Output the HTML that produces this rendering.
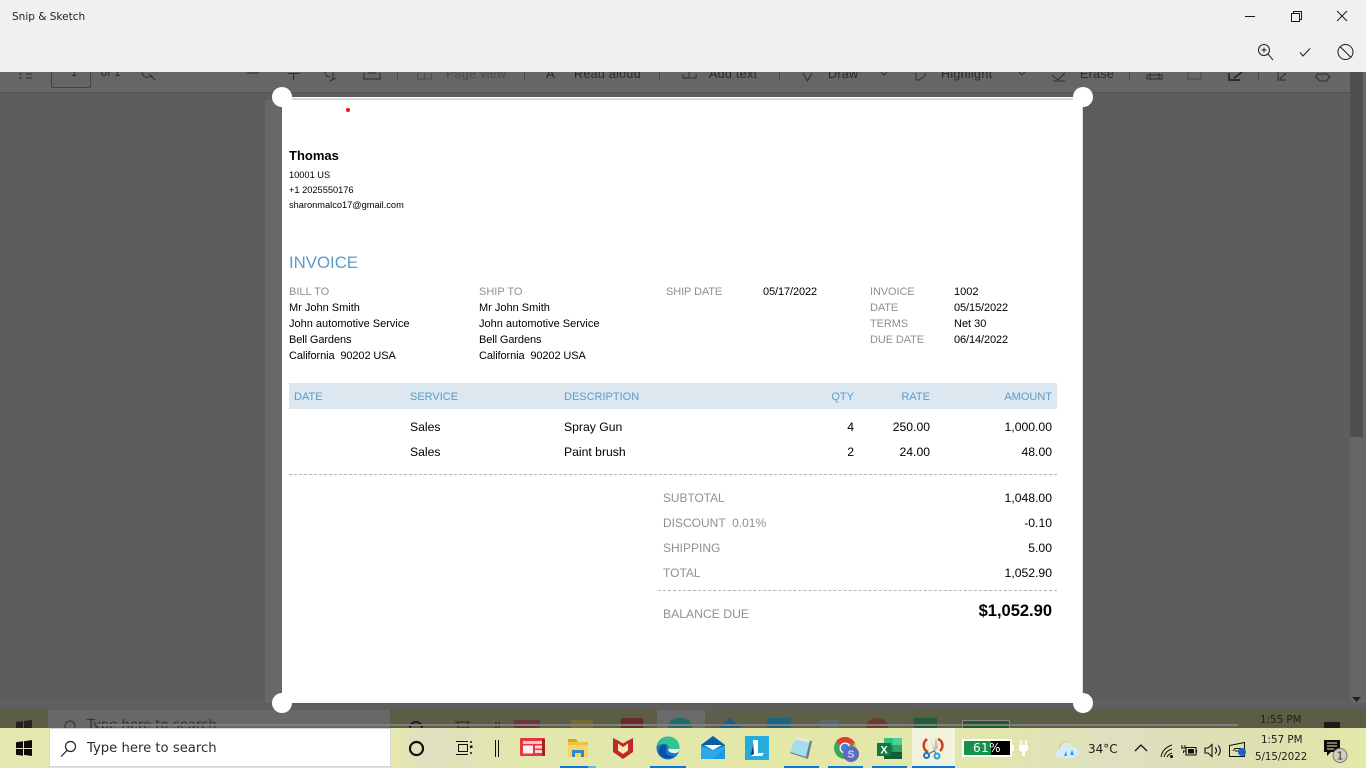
<!DOCTYPE html>
<html><head><meta charset="utf-8"><style>
html,body{margin:0;padding:0;width:1366px;height:768px;overflow:hidden;background:#5d5d5d;font-family:"Liberation Sans",sans-serif}
.t{position:absolute;white-space:pre;line-height:16px;height:16px}
.g{color:#8f8f96}.k{color:#000}.b{color:#5a9cc9}
.r{text-align:right}
.s{font-size:11px}.m{font-size:12.2px}.x{font-size:9.25px}
.n{letter-spacing:-.1px}
svg{position:absolute;overflow:visible}
.box{position:absolute}
.tb{font-size:12.5px;letter-spacing:.3px;top:66px;line-height:16px;position:absolute;white-space:pre;font-family:"Liberation Sans",sans-serif;color:#2a2a2a}
</style></head><body>
<!-- dim background -->
<div class="box" style="left:0;top:72px;width:1366px;height:21px;background:#666"></div>
<div class="box" style="left:0;top:92px;width:1350px;height:1px;background:#535353"></div>
<div class="box" style="left:1350px;top:72px;width:16px;height:636px;background:#666"></div>
<div class="box" style="left:1350px;top:72px;width:13px;height:365px;background:#4f4f4f"></div>
<svg style="left:1352px;top:697px" width="10" height="6"><path d="M0 0H9L4.500 5z" fill="#222"/></svg>
<div class="box" style="left:0;top:702px;width:1350px;height:1px;background:#666"></div>
<div class="box" style="left:265px;top:100px;width:17px;height:608px;background:#686868"></div>
<!-- toolbar remnants -->
<div class="box" style="left:51px;top:72px;width:38px;height:15px;border:1px solid #444;border-top:0;border-radius:0 0 2px 2px"></div>
<div class="tb" style="left:71px;font-size:11px;top:65px">1</div>
<div class="tb" style="left:101px;font-size:11px;top:65px">of 1</div>
<svg style="left:15px;top:72px" width="300" height="14" fill="none" stroke="#2e2e2e"><path d="M4 2H7M11 2H17M4 6H7M11 6H17"/><path d="M127 0a5.500 5.500 0 0 0 10 3M134 2L140 8"/></svg>
<svg style="left:240px;top:70px" width="150" height="18" fill="none" stroke="#2e2e2e"><path d="M7 3H19M53.500 3V10M48 3.500H60"/><path d="M85 2C85 5 87 7 90 7M93 2V9L90 11L96 8M124 3V9H140V3M128 3H136"/></svg>
<div class="box" style="left:397px;top:72px;width:1px;height:7px;background:#4a4a4a"></div>
<svg style="left:415px;top:70px" width="20" height="18" fill="none" stroke="#4a4a4a"><path d="M2.500 3V9H16.500V3M9.500 3V9"/></svg>
<div class="tb" style="left:446px;color:#4c4c4c">Page view</div>
<div class="box" style="left:524px;top:72px;width:1px;height:8px;background:#4a4a4a"></div>
<div class="tb" style="left:546px;font-size:13px">A</div>
<div class="tb" style="left:574px">Read aloud</div>
<div class="box" style="left:659px;top:72px;width:1px;height:8px;background:#4a4a4a"></div>
<svg style="left:683px;top:70px" width="16" height="10" fill="none" stroke="#2e2e2e"><path d="M0 4V8H13V4M6 2V7"/></svg>
<div class="tb" style="left:709px">Add text</div>
<div class="box" style="left:779px;top:72px;width:1px;height:8px;background:#4a4a4a"></div>
<svg style="left:802px;top:70px" width="14" height="12" fill="none" stroke="#2e2e2e"><path d="M1 3L5.500 11L10 3"/></svg>
<div class="tb" style="left:828px">Draw</div>
<svg style="left:880px;top:72px" width="8" height="4" fill="none" stroke="#333"><path d="M1 0L4 3L7 0"/></svg>
<svg style="left:915px;top:70px" width="14" height="12" fill="none" stroke="#2e2e2e"><path d="M1 3V10H4L10 6V3"/></svg>
<div class="tb" style="left:941px">Highlight</div>
<svg style="left:1018px;top:72px" width="8" height="4" fill="none" stroke="#333"><path d="M1 0L4 3L7 0"/></svg>
<svg style="left:1050px;top:70px" width="18" height="12" fill="none" stroke="#2e2e2e"><path d="M2 5L8 10L15 3M3 11H15"/></svg>
<div class="tb" style="left:1080px">Erase</div>
<div class="box" style="left:1129px;top:72px;width:1px;height:8px;background:#4a4a4a"></div>
<svg style="left:1145px;top:70px" width="200" height="12" fill="none" stroke="#2e2e2e"><path d="M2 5H17V9H2zM5 3V9H14V3"/><path d="M43 2V9H56V2" stroke="#4a4a4a"/><path d="M84 3V10H95M89 8L97 2" stroke-width="2"/><path d="M133 2V10H141M135 9L141 3"/><path d="M172 4H182L185 7L181 11H175L171 7z"/></svg>
<div class="box" style="left:1258px;top:72px;width:1px;height:8px;background:#4a4a4a"></div>

<!-- title bar -->
<div class="box" style="left:0;top:0;width:1366px;height:72px;background:#f1f0f0"></div>
<div class="t" style="left:12px;top:9px;color:#222;font-family:'DejaVu Sans';font-size:10.5px">Snip &amp; Sketch</div>
<svg style="left:1240px;top:5px" width="126" height="60" fill="none" stroke="#1a1a1a" stroke-width="1">
<path d="M5 11.500H15"/>
<path d="M51.500 8.500H59.500V16.500H51.500zM53.500 8V6.500H61.500V14.500H60"/>
<path d="M97 6L107 16M107 6L97 16"/>
<circle cx="24" cy="45" r="5.500"/><path d="M28 49L33 55M21.500 45H26.500M24 42.500V47.500"/>
<path d="M60 47.500L63 51L70 43.500"/>
<circle cx="105.500" cy="47" r="7.500"/><path d="M100 41.500L111 52.500"/>
</svg>

<!-- paper -->
<div class="box" style="left:282px;top:97px;width:800px;height:606px;background:#fff"></div>
<div class="box" style="left:282px;top:97px;width:800px;height:3px;background:#d9d9d9"></div>
<div class="box" style="left:282px;top:97px;width:800px;height:1px;background:#fff"></div>
<div class="box" style="left:1082px;top:100px;width:1px;height:603px;background:#ddd"></div>
<div class="box" style="left:346px;top:108px;width:4px;height:4px;border-radius:50%;background:#f01020"></div>

<div class="t k" style="left:289px;top:148px;font-size:13px;font-weight:bold">Thomas</div>
<div class="t k x" style="left:289px;top:167px">10001 US</div>
<div class="t k x" style="left:289px;top:182px">+1 2025550176</div>
<div class="t k x" style="left:289px;top:197px">sharonmalco17@gmail.com</div>
<div class="t b" style="left:289px;top:254px;font-size:16.800px;line-height:17px;height:17px">INVOICE</div>

<div class="t g s" style="left:289px;top:284px">BILL TO</div>
<div class="t k s" style="left:289px;top:300px">Mr John Smith</div>
<div class="t k s" style="left:289px;top:316px">John automotive Service</div>
<div class="t k s n" style="left:289px;top:332px">Bell Gardens</div>
<div class="t k s n" style="left:289px;top:348px">California  90202 USA</div>
<div class="t g s" style="left:479px;top:284px">SHIP TO</div>
<div class="t k s" style="left:479px;top:300px">Mr John Smith</div>
<div class="t k s" style="left:479px;top:316px">John automotive Service</div>
<div class="t k s n" style="left:479px;top:332px">Bell Gardens</div>
<div class="t k s n" style="left:479px;top:348px">California  90202 USA</div>
<div class="t g s n" style="left:666px;top:284px">SHIP DATE</div>
<div class="t k s n" style="left:763px;top:284px">05/17/2022</div>
<div class="t g s n" style="left:870px;top:284px">INVOICE</div>
<div class="t k s" style="left:954px;top:284px">1002</div>
<div class="t g s n" style="left:870px;top:300px">DATE</div>
<div class="t k s n" style="left:954px;top:300px">05/15/2022</div>
<div class="t g s n" style="left:870px;top:316px">TERMS</div>
<div class="t k s" style="left:954px;top:316px">Net 30</div>
<div class="t g s n" style="left:870px;top:332px">DUE DATE</div>
<div class="t k s n" style="left:954px;top:332px">06/14/2022</div>

<div class="box" style="left:289px;top:383px;width:768px;height:26px;background:#dce7f0"></div>
<div class="t b s" style="left:294px;top:389px">DATE</div>
<div class="t b s" style="left:410px;top:389px">SERVICE</div>
<div class="t b s" style="left:564px;top:389px">DESCRIPTION</div>
<div class="t b s r" style="left:800px;width:54px;top:389px">QTY</div>
<div class="t b s r" style="left:870px;width:60px;top:389px">RATE</div>
<div class="t b s r" style="left:952px;width:100px;top:389px">AMOUNT</div>

<div class="t k m" style="left:410px;top:419px">Sales</div>
<div class="t k m" style="left:564px;top:419px">Spray Gun</div>
<div class="t k m r" style="left:800px;width:54px;top:419px">4</div>
<div class="t k m r" style="left:870px;width:60px;top:419px">250.00</div>
<div class="t k m r" style="left:952px;width:100px;top:419px">1,000.00</div>
<div class="t k m" style="left:410px;top:444px">Sales</div>
<div class="t k m" style="left:564px;top:444px">Paint brush</div>
<div class="t k m r" style="left:800px;width:54px;top:444px">2</div>
<div class="t k m r" style="left:870px;width:60px;top:444px">24.00</div>
<div class="t k m r" style="left:952px;width:100px;top:444px">48.00</div>
<div class="box" style="left:289px;top:474px;width:768px;border-top:1px dashed #b5b5b5"></div>

<div class="t g" style="left:663px;top:490px;font-size:11.900px">SUBTOTAL</div>
<div class="t k m r" style="left:952px;width:100px;top:490px">1,048.00</div>
<div class="t g" style="left:663px;top:515px;font-size:12px">DISCOUNT  0.01%</div>
<div class="t k m r" style="left:952px;width:100px;top:515px">-0.10</div>
<div class="t g" style="left:663px;top:540px;font-size:12px">SHIPPING</div>
<div class="t k m r" style="left:952px;width:100px;top:540px">5.00</div>
<div class="t g" style="left:663px;top:565px;font-size:12px">TOTAL</div>
<div class="t k m r" style="left:952px;width:100px;top:565px">1,052.90</div>
<div class="box" style="left:658px;top:590px;width:399px;border-top:1px dashed #b5b5b5"></div>
<div class="t g" style="left:663px;top:606px;font-size:12.200px">BALANCE DUE</div>
<div class="t k r" style="left:902px;width:150px;top:603px;font-size:16.500px;font-weight:bold">$1,052.90</div>

<!-- top handles -->
<div class="box" style="left:272px;top:87px;width:20px;height:20px;border-radius:50%;background:#fff"></div>
<div class="box" style="left:1072.500px;top:87px;width:20px;height:20px;border-radius:50%;background:#fff"></div>

<!-- dimmed taskbar -->
<div class="box" style="left:0;top:703px;width:1366px;height:7px;background:#5e5e5e"></div>
<div class="box" style="left:0;top:710px;width:1366px;height:18px;background:#5c5d45"></div>
<div class="box" style="left:48px;top:710px;width:342px;height:18px;background:#686868"></div>
<div class="box" style="left:657px;top:710px;width:48px;height:18px;background:#6a6a6a"></div>
<div class="box" style="left:705px;top:710px;width:205px;height:18px;background:#5e5f4b"></div>
<div class="t" style="left:87px;top:718px;font-family:'DejaVu Sans';font-size:13.200px;color:#333">Type here to search</div>
<svg style="left:16px;top:720px" width="16" height="8"><path d="M0 2L7 1V8H0zM8 1L16 0V8H8z" fill="#222"/></svg>
<svg style="left:62px;top:720px" width="16" height="8" fill="none" stroke="#333"><circle cx="8" cy="6" r="5"/></svg>
<svg style="left:408px;top:721px" width="100" height="7" fill="none" stroke="#222"><circle cx="8" cy="7" r="6" stroke-width="2"/><path d="M47 1H62M50 1V7H60V1M88 1V7M91 1V7"/></svg>
<div class="box" style="left:514px;top:720px;width:26px;height:8px;background:#6b3638"></div>
<div class="box" style="left:571px;top:720px;width:22px;height:8px;background:#7a6a30"></div>
<div class="box" style="left:621px;top:718px;width:22px;height:10px;background:#6b2a28"></div>
<div class="box" style="left:668px;top:718px;width:24px;height:10px;border-radius:12px 12px 0 0;background:#1c6a6e"></div>
<svg style="left:718px;top:718px" width="24" height="10"><path d="M0 10L12 0L24 10z" fill="#1d5b8a"/></svg>
<div class="box" style="left:767px;top:718px;width:24px;height:10px;background:#1a6580"></div>
<div class="box" style="left:820px;top:720px;width:18px;height:8px;background:#5a6a6a"></div>
<div class="box" style="left:866px;top:718px;width:22px;height:10px;border-radius:11px 11px 0 0;background:#6d3a2c"></div>
<div class="box" style="left:914px;top:718px;width:23px;height:10px;background:#1f5d3a"></div>
<div class="box" style="left:962px;top:720px;width:48px;height:8px;background:#1e5a30;border:1px solid #888;border-bottom:0;box-sizing:border-box"></div>
<div class="t" style="left:1260px;top:712px;color:#1f1f1f;font-family:'DejaVu Sans';font-size:10.300px">1:55 PM</div>
<div class="box" style="left:1324px;top:722px;width:16px;height:6px;background:#1c1c1c"></div>
<div class="box" style="left:98px;top:724px;width:1140px;height:2px;background:#7f7f7f"></div>

<!-- bottom handles -->
<div class="box" style="left:272px;top:693px;width:20px;height:20px;border-radius:50%;background:#fff"></div>
<div class="box" style="left:1072.500px;top:693px;width:20px;height:20px;border-radius:50%;background:#fff"></div>

<!-- taskbar -->
<div class="box" style="left:0;top:728px;width:1366px;height:40px;background:linear-gradient(90deg,#e4e8ae 0,#e4e8ae 29%,#dfe0c0 31%,#e2e7ac 38%,#e3e8a8 60%,#e2e6ad 73%,#dee0c0 82%,#dde0b0 92%,#e4e8a8 100%)"></div>
<div class="box" style="left:912px;top:728px;width:43px;height:40px;background:#f1f3dc"></div>
<svg style="left:16px;top:740px" width="17" height="17"><path d="M0 2.300L7 1.300V8H0zM8 1.200L16 0V8H8zM0 9H7V15.700L0 14.700zM8 9H16V16L8 14.900z" fill="#0b0b0b"/></svg>
<div class="box" style="left:49px;top:728px;width:342px;height:39px;background:#fff;border:1px solid #d5d5d5;box-sizing:border-box"></div>
<svg style="left:60px;top:740px" width="18" height="18" fill="none" stroke="#222" stroke-width="1.200"><circle cx="10.500" cy="6.500" r="5"/><path d="M7 10.500L1 16.500"/></svg>
<div class="t" style="left:87px;top:741px;font-family:'DejaVu Sans';font-size:13.200px;color:#2b2b2b">Type here to search</div>
<svg style="left:408px;top:740px" width="100" height="18" fill="none" stroke="#111"><circle cx="8.500" cy="8.500" r="6.500" stroke-width="2.200"/><path d="M48 1.500H60M48 14.500H60M50.500 4.500H59.500V11.500H50.500z"/><path d="M63 1V3M63 12V14" stroke-width="1.500"/><rect x="62" y="5.500" width="2.500" height="2.500" fill="#111" stroke="none"/><path d="M87.500 0V17M90.500 0V17"/></svg>
<!-- news -->
<svg style="left:520px;top:737px" width="26" height="22"><rect x="0" y="1" width="25" height="18" rx="1" fill="#e63740"/><rect x="22" y="2" width="3" height="17" fill="#a32025"/><rect x="3" y="4" width="19" height="3" fill="#ffc5c5"/><rect x="3" y="8.500" width="10" height="8" fill="#fff0f0"/><rect x="15" y="8.500" width="7" height="3" fill="#ffd5d5"/><rect x="15" y="13" width="7" height="3" fill="#ffd5d5"/></svg>
<!-- folder -->
<svg style="left:566px;top:738px" width="24" height="20"><path d="M2 1H10L12 4H2z" fill="#d9a520"/><rect x="2" y="4" width="20" height="15" fill="#f7d560"/><rect x="2" y="4" width="20" height="3" fill="#eec04a"/><path d="M6 19V12H18V19H15V15H9V19z" fill="#2b88d8"/></svg>
<!-- mcafee -->
<svg style="left:612px;top:736px" width="22" height="24"><path d="M1 2L6 4.500L11 7.500L16 4.500L21 2V16L11 23L1 16z" fill="#c1272d"/><path d="M6 7.500L11 11L16 7.500V14.500L11 18L6 14.500z" fill="#f6e9b2"/></svg>
<!-- edge -->
<svg style="left:656px;top:736px" width="24" height="24"><circle cx="12" cy="12" r="11.500" fill="#1578c9"/><path d="M1 10C3 2 11 0 15 1C21 2 24 8 23.500 13L12 13C14 8 8 6 1 10z" fill="#31c48d"/><path d="M10 13C8 17 12 21 18 20C15 23 8 24 4 19C2 16 3 11 6 9C8 8 11 9 10 13z" fill="#0c4f9e"/><path d="M12 13L23.500 13C23 16 21 18 17 17C14 17 12 15 12 13z" fill="#e8f4ef"/></svg>
<!-- mail -->
<svg style="left:701px;top:736px" width="24" height="24"><path d="M0 9L12 0L24 9V23H0z" fill="#1e9be0"/><path d="M0 9L12 0L24 9L12 14z" fill="#0a5ea8"/><path d="M3 9H21L12 14z" fill="#fff"/><path d="M0 10L12 15L24 10V12L12 23H0z" fill="#36b0ee" opacity=".6"/></svg>
<!-- L -->
<svg style="left:745px;top:736px" width="24" height="24"><rect width="24" height="24" fill="#25acd8"/><path d="M8 4H13V17H19L17 20H5C7 15 8 9 8 4z" fill="#fff"/><path d="M8 5L9 18L5 20C7 15 8 9 8 5z" fill="#123d78"/></svg>
<!-- notepad -->
<svg style="left:789px;top:736px" width="24" height="24"><path d="M7 2L23 5L19 23L1 17z" fill="#6a7e7a"/><path d="M7 1L21 4L17 21L1 16z" fill="#a9dceb"/><path d="M7 1L21 4L20.300 6.500L6 3.500z" fill="#e8e8e0"/></svg>
<!-- chrome -->
<svg style="left:834px;top:737px" width="24" height="24"><circle cx="11" cy="11" r="11" fill="#3aa757"/><path d="M11 0A11 11 0 0 1 21 6H11A5 5 0 0 0 6.500 8.500L2.500 4A11 11 0 0 1 11 0z" fill="#e33b2e"/><path d="M21 6A11 11 0 0 1 12 22L16 13z" fill="#f9c922"/><circle cx="11" cy="11" r="5.500" fill="#fff"/><circle cx="11" cy="11" r="4.200" fill="#3f7fe6"/><circle cx="17" cy="17" r="8" fill="#5c6bc0"/><text x="17" y="20.500" font-size="10" text-anchor="middle" fill="#fff" font-family="Liberation Sans">S</text></svg>
<!-- excel -->
<svg style="left:877px;top:737px" width="26" height="24"><rect x="7" y="1" width="18" height="21" fill="#1f8a55"/><rect x="7" y="1" width="18" height="7" fill="#34c07d"/><rect x="16" y="1" width="9" height="7" fill="#4cd097"/><rect x="7" y="15" width="18" height="7" fill="#11603b"/><rect x="16" y="8" width="9" height="7" fill="#2ca66b"/><rect x="0" y="6" width="14" height="13" fill="#0f7a3f"/><text x="7" y="16.500" font-size="11" font-weight="bold" text-anchor="middle" fill="#fff" font-family="Liberation Sans">X</text></svg>
<!-- snip -->
<svg style="left:922px;top:736px" width="24" height="24" fill="none"><path d="M5 3C0 7 1 14 6 16M18 15C22 11 21 5 16 3" stroke="#d43c1e" stroke-width="2.500"/><path d="M8 2L12 13L14 1L16 12L12 16z" fill="#bcbcbc"/><path d="M12 15L6 18M12 15L15 18" stroke="#666"/><circle cx="4.500" cy="19.500" r="2.500" stroke="#1c72c8" stroke-width="2"/><circle cx="15" cy="20" r="2.500" stroke="#2aa0e0" stroke-width="2"/></svg>
<!-- indicators -->
<div class="box" style="left:560px;top:766px;width:28px;height:2px;background:#0a78d4"></div>
<div class="box" style="left:588px;top:766px;width:8px;height:2px;background:#6ab4e8"></div>
<div class="box" style="left:650px;top:766px;width:36px;height:2px;background:#0a78d4"></div>
<div class="box" style="left:784px;top:766px;width:35px;height:2px;background:#0a78d4"></div>
<div class="box" style="left:828px;top:766px;width:35px;height:2px;background:#0a78d4"></div>
<div class="box" style="left:872px;top:766px;width:35px;height:2px;background:#0a78d4"></div>
<div class="box" style="left:912px;top:766px;width:43px;height:2px;background:#0a78d4"></div>
<!-- battery meter -->
<div class="box" style="left:962px;top:739px;width:50px;height:18px;background:#000;border:2px solid #fff;box-sizing:border-box"></div>
<div class="box" style="left:964px;top:741px;width:27px;height:14px;background:#13924a"></div>
<div class="box" style="left:1012px;top:745px;width:2px;height:6px;background:#fff"></div>
<div class="t" style="left:973px;top:740px;font-family:'DejaVu Sans';font-size:12px;color:#fff;letter-spacing:.4px">61%</div>
<svg style="left:1018px;top:740px" width="12" height="17"><path d="M3 0V5M8 0V5" stroke="#fff" stroke-width="1.500"/><path d="M1 5H10V10L7 12V16H4V12L1 10z" fill="#fff"/></svg>
<!-- weather -->
<svg style="left:1057px;top:740px" width="22" height="19"><path d="M2 8A6 6 0 0 1 12 3L6 11z" fill="#f3c64e"/><path d="M3 18A4 4 0 0 1 3 10A6 6 0 0 1 15 7A5.500 5.500 0 0 1 17 18z" fill="#d6ebfa"/><path d="M9 11L7 16H10zM15 10L13 15H17z" fill="#3a95dc"/></svg>
<div class="t" style="left:1088px;top:741px;font-family:'DejaVu Sans';font-size:12px;color:#1c1c1c">34°C</div>
<svg style="left:1134px;top:742px" width="120" height="18" fill="none" stroke="#111" stroke-width="1.100">
<path d="M1 9L7 3L13 9" stroke-width="1.300"/>
<path d="M27 15C28 9 32 5 38 3M30 15C31 11 34 8 38 7M33 15C34 13 35 12 38 11" stroke-width="1"/><circle cx="37.500" cy="14.500" r="1.500" fill="#111" stroke="none"/>
<path d="M52 5.500H62V13H52zM62.500 8V10.500" stroke-width="1.100"/><rect x="54" y="7" width="6" height="4.500" fill="#111" stroke="none"/><path d="M48 3V6M51 3V6M47 6H52V9H49.500V11" stroke-width="1"/>
<path d="M71 6H74L78 2.500V14.500L74 11H71zM81 5.500C83 7 83 10 81 11.500M84 3.500C87 6 87 11 84 13.500"/>
<path d="M95.500 3.500L110.500 0.500V14.500H95.500zM99 9L101 6.500H106M107 6L105 9H101" stroke-width="1"/></svg>
<div class="box" style="left:1238px;top:748px;width:8px;height:8px;border-radius:50%;background:#1c64c4"></div>
<div class="t" style="left:1261px;top:732px;font-family:'DejaVu Sans';font-size:10.300px;color:#1c1c1c">1:57 PM</div>
<div class="t" style="left:1255px;top:750px;font-family:'DejaVu Sans';font-size:10.200px;color:#1c1c1c">5/15/2022</div>
<svg style="left:1324px;top:740px" width="26" height="24"><path d="M0 0H16V12H7L3 16V12H0z" fill="#0b0b0b"/><path d="M3 3H13M3 6H13M3 9H10" stroke="#e4e8ae"/><circle cx="16" cy="15.500" r="7" fill="#cfcfbd" stroke="#777"/><text x="16" y="19.500" font-size="11" text-anchor="middle" fill="#333" font-family="DejaVu Sans">1</text></svg>
</body></html>
